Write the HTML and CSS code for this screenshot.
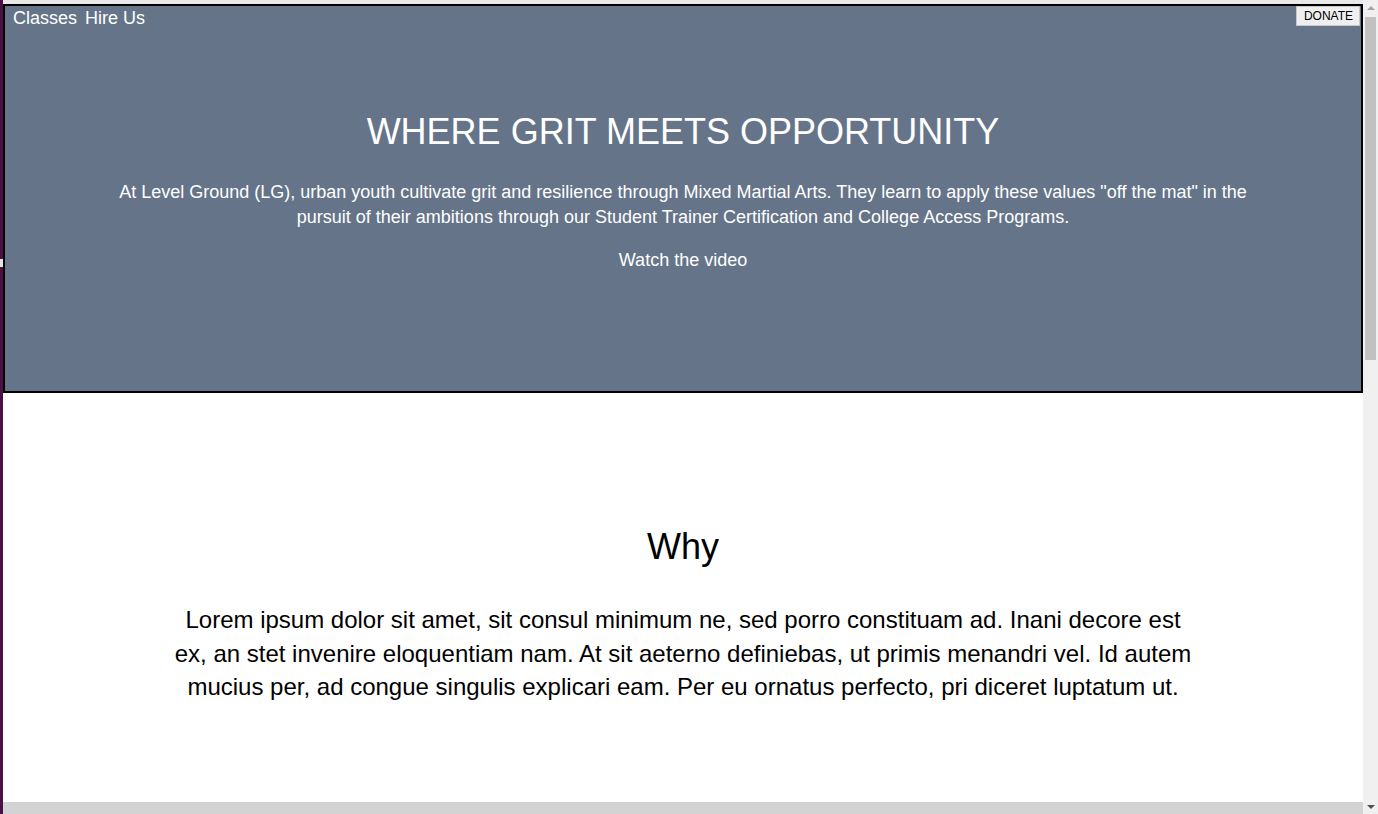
FILE: index.html
```html
<!DOCTYPE html>
<html lang="en">
<head>
<meta charset="utf-8">
<title>Level Ground</title>
<link rel="stylesheet" href="styles.css">
</head>
<body>
<div class="frame">
  <div class="strip"><div class="notch"></div></div>
  <div class="main">
    <div class="viewport">
      <div class="topline"></div>
      <header class="hero">
        <div class="nav">
          <div class="links">
            <a href="#">Classes</a>
            <a href="#">Hire Us</a>
          </div>
          <button class="donate">DONATE</button>
        </div>
        <h1 class="hero-title">WHERE GRIT MEETS OPPORTUNITY</h1>
        <p class="hero-text">At Level Ground (LG), urban youth cultivate grit and resilience through Mixed Martial Arts. They learn to apply these values "off the mat" in the pursuit of their ambitions through our Student Trainer Certification and College Access Programs.</p>
        <p class="hero-link">Watch the video</p>
      </header>
      <section class="why">
        <h2 class="why-title">Why</h2>
        <p class="why-text">Lorem ipsum dolor sit amet, sit consul minimum ne, sed porro constituam ad. Inani decore est ex, an stet invenire eloquentiam nam. At sit aeterno definiebas, ut primis menandri vel. Id autem mucius per, ad congue singulis explicari eam. Per eu ornatus perfecto, pri diceret luptatum ut.</p>
      </section>
    </div>
    <div class="hscroll"></div>
  </div>
  <div class="vscroll">
    <div class="arrow-up"></div>
    <div class="thumb"></div>
    <div class="track"></div>
    <div class="arrow-down"></div>
  </div>
</div>
</body>
</html>
```
FILE: styles.css
```css
html, body {
  margin: 0;
  padding: 0;
  height: 100%;
  overflow: hidden;
  background: #ffffff;
  font-family: "Liberation Sans", Arial, sans-serif;
}

.frame {
  display: flex;
  height: 814px;
  width: 1378px;
}

.strip {
  width: 3px;
  flex: none;
  background: #4b1146;
  display: flex;
  flex-direction: column;
}

.notch {
  margin-top: 259px;
  height: 8px;
  width: 3px;
  background: #e4e4e4;
}

.main {
  flex: 1;
  display: flex;
  flex-direction: column;
  min-width: 0;
}

.viewport {
  flex: 1;
  overflow: hidden;
  background: #ffffff;
}

.topline {
  height: 4px;
  background: #e9e9e9;
}

.hero {
  box-sizing: border-box;
  height: 389px;
  border: 2px solid #000;
  background: #657489;
  color: #ffffff;
  text-align: center;
}

.nav {
  display: flex;
  justify-content: space-between;
  align-items: flex-start;
  padding-left: 8px;
  padding-right: 1px;
}

.links {
  display: flex;
  gap: 8px;
  padding-top: 2px;
}

.links a {
  color: #ffffff;
  text-decoration: none;
  font-size: 18px;
  line-height: 21px;
}

.donate {
  font-family: "Liberation Sans", Arial, sans-serif;
  font-size: 12px;
  line-height: 14px;
  color: #000;
  background: #efefef;
  border: 1px solid #c8c8c8;
  border-radius: 0;
  padding: 2px 6px 2px 7px;
  margin: 0;
}

.hero-title {
  font-size: 36px;
  font-weight: normal;
  line-height: 41px;
  margin: 82px 0 0;
}

.hero-text {
  font-size: 18px;
  line-height: 25px;
  max-width: 1150px;
  margin: 28px auto 0;
}

.hero-link {
  font-size: 18px;
  line-height: 25px;
  margin: 18px 0 0;
}

.why {
  text-align: center;
  padding-top: 133px;
  color: #000;
}

.why-title {
  font-size: 36px;
  font-weight: normal;
  line-height: 41px;
  margin: 0;
}

.why-text {
  font-size: 24px;
  line-height: 33.5px;
  max-width: 1024px;
  margin: 36px auto 0;
}

.hscroll {
  height: 12px;
  flex: none;
  background: #d3d3d3;
}

.vscroll {
  width: 15px;
  flex: none;
  background: #f0f0f0;
  display: flex;
  flex-direction: column;
  align-items: center;
}

.arrow-up {
  margin-top: 6px;
  width: 0;
  height: 0;
  border-left: 4px solid transparent;
  border-right: 4px solid transparent;
  border-bottom: 4px solid #a3a3a3;
}

.thumb {
  margin-top: 7px;
  width: 11px;
  height: 343px;
  background: #c1c1c1;
}

.track {
  flex: 1;
}

.arrow-down {
  margin-bottom: 5px;
  width: 0;
  height: 0;
  border-left: 4px solid transparent;
  border-right: 4px solid transparent;
  border-top: 4px solid #505050;
}
```
